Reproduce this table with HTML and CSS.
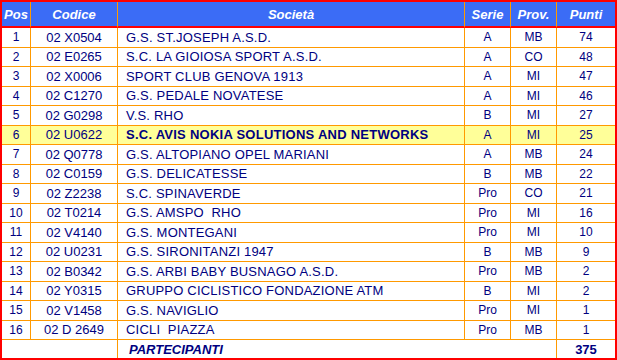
FILE: index.html
```html
<!DOCTYPE html>
<html lang="it">
<head>
<meta charset="utf-8">
<title>Classifica Società</title>
<link rel="stylesheet" href="styles.css">
</head>
<body>
<table class="standings">
  <thead>
    <tr>
      <th class="c-pos">Pos</th>
      <th class="c-code">Codice</th>
      <th class="c-team">Società</th>
      <th class="c-serie">Serie</th>
      <th class="c-prov">Prov.</th>
      <th class="c-pts">Punti</th>
    </tr>
  </thead>
  <tbody>
    <tr><td>1</td><td class="code">02 X0504</td><td class="team">G.S. ST.JOSEPH A.S.D.</td><td>A</td><td>MB</td><td>74</td></tr>
    <tr><td>2</td><td class="code">02 E0265</td><td class="team">S.C. LA GIOIOSA SPORT A.S.D.</td><td>A</td><td>CO</td><td>48</td></tr>
    <tr><td>3</td><td class="code">02 X0006</td><td class="team">SPORT CLUB GENOVA 1913</td><td>A</td><td>MI</td><td>47</td></tr>
    <tr><td>4</td><td class="code">02 C1270</td><td class="team">G.S. PEDALE NOVATESE</td><td>A</td><td>MI</td><td>46</td></tr>
    <tr><td>5</td><td class="code">02 G0298</td><td class="team">V.S. RHO</td><td>B</td><td>MI</td><td>27</td></tr>
    <tr class="highlight"><td>6</td><td class="code">02 U0622</td><td class="team">S.C. AVIS NOKIA SOLUTIONS AND NETWORKS</td><td>A</td><td>MI</td><td>25</td></tr>
    <tr><td>7</td><td class="code">02 Q0778</td><td class="team">G.S. ALTOPIANO OPEL MARIANI</td><td>A</td><td>MB</td><td>24</td></tr>
    <tr><td>8</td><td class="code">02 C0159</td><td class="team">G.S. DELICATESSE</td><td>B</td><td>MB</td><td>22</td></tr>
    <tr><td>9</td><td class="code">02 Z2238</td><td class="team">S.C. SPINAVERDE</td><td>Pro</td><td>CO</td><td>21</td></tr>
    <tr><td>10</td><td class="code">02 T0214</td><td class="team">G.S. AMSPO&nbsp; RHO</td><td>Pro</td><td>MI</td><td>16</td></tr>
    <tr><td>11</td><td class="code">02 V4140</td><td class="team">G.S. MONTEGANI</td><td>Pro</td><td>MI</td><td>10</td></tr>
    <tr><td>12</td><td class="code">02 U0231</td><td class="team">G.S. SIRONITANZI 1947</td><td>B</td><td>MB</td><td>9</td></tr>
    <tr><td>13</td><td class="code">02 B0342</td><td class="team">G.S. ARBI BABY BUSNAGO A.S.D.</td><td>Pro</td><td>MB</td><td>2</td></tr>
    <tr><td>14</td><td class="code">02 Y0315</td><td class="team">GRUPPO CICLISTICO FONDAZIONE ATM</td><td>B</td><td>MI</td><td>2</td></tr>
    <tr><td>15</td><td class="code">02 V1458</td><td class="team">G.S. NAVIGLIO</td><td>Pro</td><td>MI</td><td>1</td></tr>
    <tr><td>16</td><td class="code">02 D 2649</td><td class="team">CICLI&nbsp; PIAZZA</td><td>Pro</td><td>MB</td><td>1</td></tr>
  </tbody>
  <tfoot>
    <tr>
      <td colspan="2"></td>
      <td colspan="3" class="total-label">PARTECIPANTI</td>
      <td class="total">375</td>
    </tr>
  </tfoot>
</table>
</body>
</html>
```
FILE: styles.css
```css
html, body {
  margin: 0;
  padding: 0;
  background: #ffffff;
}

.standings {
  width: 617px;
  table-layout: fixed;
  border-collapse: separate;
  border-spacing: 0;
  border: 2px solid #ff0000;
  font-family: "Liberation Sans", Arial, sans-serif;
  font-size: 12px;
  color: #000080;
}

.standings th,
.standings td {
  box-sizing: border-box;
  padding: 0;
  text-align: center;
  border-right: 1px solid #ff9900;
  white-space: nowrap;
}

.standings th:last-child,
.standings td:last-child {
  border-right: 0;
}

.standings th {
  height: 26px;
  background: #3b6cf6;
  color: #ffffff;
  font-size: 13px;
  font-weight: bold;
  font-style: italic;
  border-bottom: 2px solid #ff0000;
}

.c-pos { width: 29px; }
.c-code { width: 87px; }
.c-team { width: 347px; }
.c-serie { width: 46px; }
.c-prov { width: 46px; }
.c-pts { width: 58px; }

.standings tbody td {
  height: 19.5px;
  border-bottom: 1px solid #ff9900;
}

.standings td.code {
  font-size: 13px;
}

.standings td.team {
  text-align: left;
  padding-left: 8px;
  font-size: 13px;
  letter-spacing: 0.2px;
}

.standings tr.highlight td {
  background: #ffff99;
}

.standings tr.highlight td.team {
  font-weight: bold;
  letter-spacing: 0.25px;
}

.standings tfoot td {
  height: 18px;
}

.standings td.total-label {
  text-align: left;
  padding-left: 11px;
  font-size: 13px;
  font-weight: bold;
  font-style: italic;
}

.standings td.total {
  font-size: 13px;
  font-weight: bold;
}
```
